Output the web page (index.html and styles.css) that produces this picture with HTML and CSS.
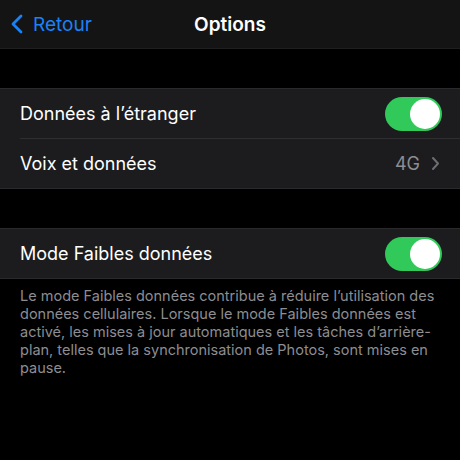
FILE: index.html
```html
<!DOCTYPE html>
<html lang="fr">
<head>
<meta charset="utf-8">
<link rel="stylesheet" href="styles.css">
</head>
<body>
<header class="nav">
  <div class="back">
    <svg class="back-chevron" width="14" height="20" viewBox="0 0 14 20"><path d="M11 2 L3 10 L11 18" fill="none" stroke="#1a82f7" stroke-width="2.8" stroke-linecap="round" stroke-linejoin="round"/></svg>
    <span>Retour</span>
  </div>
  <div class="title">Options</div>
</header>
<div class="gap"></div>
<section class="group">
  <div class="row">
    <span class="label">Données à l’étranger</span>
    <span class="toggle"><span class="knob"></span></span>
  </div>
  <div class="sep"></div>
  <div class="row">
    <span class="label">Voix et données</span>
    <span class="detail">4G
      <svg class="chev" width="9" height="15" viewBox="0 0 9 15"><path d="M2 2 L7 7.5 L2 13" fill="none" stroke="#6d6d72" stroke-width="2" stroke-linecap="round" stroke-linejoin="round"/></svg>
    </span>
  </div>
</section>
<div class="gap"></div>
<section class="group">
  <div class="row">
    <span class="label">Mode Faibles données</span>
    <span class="toggle"><span class="knob"></span></span>
  </div>
</section>
<p class="footer">Le mode Faibles données contribue à réduire l’utilisation des données cellulaires. Lorsque le mode Faibles données est activé, les mises à jour automatiques et les tâches d’arrière-plan, telles que la synchronisation de Photos, sont mises en pause.</p>
</body>
</html>
```
FILE: styles.css
```css
html, body {
  margin: 0;
  padding: 0;
  background: #000;
  width: 460px;
  height: 460px;
  overflow: hidden;
  font-family: Inter, "Noto Sans", sans-serif;
  color: #fff;
}
.nav {
  height: 48px;
  background: #141414;
  border-bottom: 1px solid #1e1e1e;
  display: flex;
  align-items: center;
  justify-content: center;
  position: relative;
}
.back {
  position: absolute;
  left: 10px;
  top: 0;
  height: 48px;
  display: flex;
  align-items: center;
  gap: 9px;
  color: #1a82f7;
  font-size: 19px;
}
.title {
  font-size: 19px;
  font-weight: 600;
  color: #fff;
}
.gap {
  height: 39px;
}
.group {
  background: #1c1c1e;
  border-top: 1px solid #2a2a2c;
  border-bottom: 1px solid #2a2a2c;
}
.row {
  height: 49px;
  display: flex;
  align-items: center;
  justify-content: space-between;
  padding: 0 18px 0 20px;
}
.sep {
  height: 1px;
  margin-left: 20px;
  background: #2e2e30;
}
.label {
  font-size: 18px;
  color: #fff;
}
.toggle {
  width: 57px;
  height: 34px;
  border-radius: 17px;
  background: #30c95a;
  display: flex;
  align-items: center;
  justify-content: flex-end;
  padding: 2px;
  box-sizing: border-box;
}
.knob {
  width: 30px;
  height: 30px;
  border-radius: 50%;
  background: #fff;
}
.detail {
  display: flex;
  align-items: center;
  gap: 11px;
  color: #8d8d92;
  font-size: 18px;
  padding-right: 2px;
}
.footer {
  margin: 8px 0 0;
  padding: 0 20px;
  font-size: 14.5px;
  line-height: 18px;
  color: #8d8d92;
}
```
